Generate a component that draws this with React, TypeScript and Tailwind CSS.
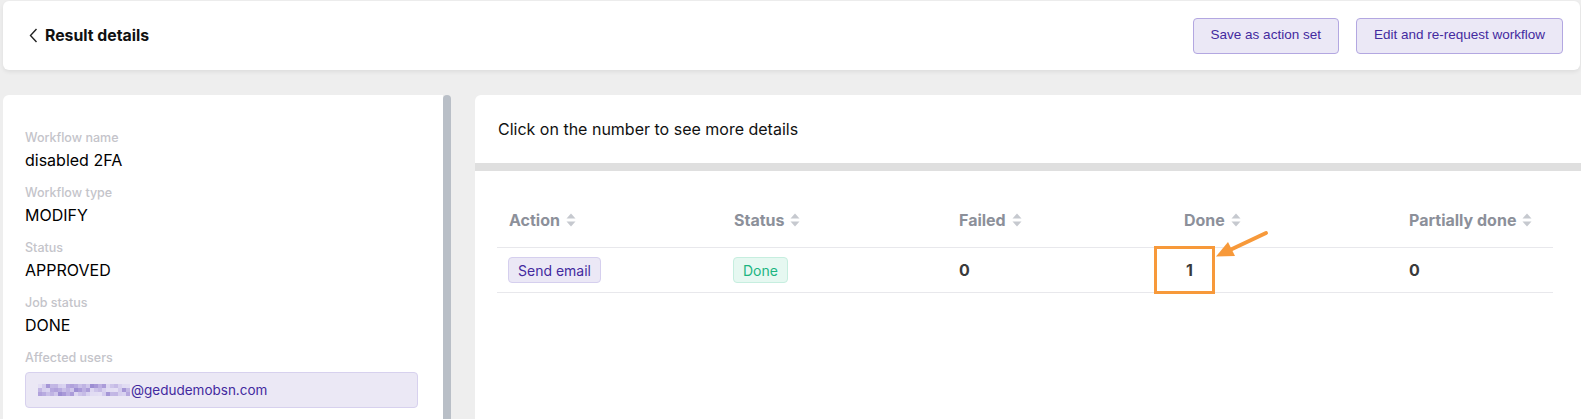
const details = [
  { label: 'Workflow name', value: 'disabled 2FA' },
  { label: 'Workflow type', value: 'MODIFY' },
  { label: 'Status', value: 'APPROVED' },
  { label: 'Job status', value: 'DONE' },
]

const columns = ['Action', 'Status', 'Failed', 'Done', 'Partially done']

// pixelated (redacted) part of the e-mail address
const mosaic = [
  'bg-[#e4dff4]', 'bg-[#c9bfe8]', 'bg-[#d8d1ef]', 'bg-[#b6a8df]', 'bg-[#ddd7f1]', 'bg-[#c2b6e4]',
  'bg-[#a999d8]', 'bg-[#d3cbed]', 'bg-[#bfb3e3]', 'bg-[#e1dcf3]', 'bg-[#b1a2dc]', 'bg-[#cdc4ea]',
  'bg-[#d6cfee]', 'bg-[#bcafe2]', 'bg-[#a596d6]', 'bg-[#cfc6eb]', 'bg-[#e2ddf3]', 'bg-[#b8abe0]',
  'bg-[#c6bbe6]', 'bg-[#d9d3f0]', 'bg-[#ab9cd9]', 'bg-[#c3b8e5]', 'bg-[#9d8ed3]',
]

function SortIcon() {
  return (
    <svg width="10" height="14" viewBox="0 0 10 14" className="ml-[6px]">
      <path d="M5 0.5 L9.5 5.5 L0.5 5.5 Z" fill="#c6c9cf" />
      <path d="M0.5 8.5 L9.5 8.5 L5 13.5 Z" fill="#c6c9cf" />
    </svg>
  )
}

function Mosaic() {
  return (
    <div className="flex flex-col">
      {[0, 1, 2].map((r) => (
        <div key={r} className="flex">
          {mosaic.map((c, i) => (
            <div key={i} className={`w-[4px] h-[4px] ${mosaic[(i * 7 + r * 5) % mosaic.length]}`} />
          ))}
        </div>
      ))}
    </div>
  )
}

export default function App() {
  return (
    <div className="w-[1581px] h-[419px] overflow-hidden bg-[#eeeeee] font-['Inter',sans-serif] text-[#111]">
      <header className="ml-[3px] mr-[1px] mt-[1px] h-[69px] bg-white rounded-md shadow-[0_2px_4px_rgba(0,0,0,0.07)] flex items-center justify-between pl-[26px] pr-[17px]">
        <div className="flex items-center gap-[7px]">
          <svg width="9" height="15" viewBox="0 0 9 15" className="text-[#222]">
            <path d="M7.5 1 L1.5 7.5 L7.5 14" fill="none" stroke="currentColor" strokeWidth="1.4" />
          </svg>
          <h1 className="text-[15.8px] font-bold leading-none">Result details</h1>
        </div>
        <div className="flex gap-[17px] font-['Liberation_Sans',Arial,sans-serif] text-[13.5px] text-[#432a9f]">
          <button className="h-[36px] px-[17px] rounded-[4px] bg-[#ebe8f6] border border-[#b3a7e1]">
            Save as action set
          </button>
          <button className="h-[36px] px-[17px] rounded-[4px] bg-[#ebe8f6] border border-[#b3a7e1]">
            Edit and re-request workflow
          </button>
        </div>
      </header>

      <div className="flex mt-[25px] h-[324px]">
        <aside className="ml-[3px] w-[440px] bg-white rounded-tl-md pl-[22px] pt-[35px]">
          {details.map((d) => (
            <div key={d.label} className="mb-[14px]">
              <div className="text-[12.5px] leading-[16px] text-[#c4c4ca] font-medium">{d.label}</div>
              <div className="mt-[3px] text-[16px] leading-[22px] text-black">{d.value}</div>
            </div>
          ))}
          <div className="text-[12.5px] leading-[16px] text-[#c4c4ca] font-medium">Affected users</div>
          <div className="mt-[6px] w-[393px] h-[36px] rounded-[4px] bg-[#ebe8f5] border border-[#d7d1ee] flex items-center pl-[12px] text-[13.5px] text-[#432a9f]">
            <Mosaic />
            <span className="ml-[1px]">@gedudemobsn.com</span>
          </div>
        </aside>
        <div className="w-[8px] bg-[#b9bfc7] rounded-t-full" />

        <main className="ml-[24px] flex-1 flex flex-col">
          <div className="h-[68px] bg-white rounded-tl-md flex items-center pl-[23px] text-[16px]">
            Click on the number to see more details
          </div>
          <div className="h-[8px] bg-[#dfdfdf]" />
          <div className="flex-1 bg-white pl-[22px] pr-[28px] pt-[21px]">
            <div className="relative">
              <div className="grid grid-cols-[225px_225px_225px_225px_1fr] h-[56px] items-center border-b border-[#e8e8ec]">
                {columns.map((c) => (
                  <div key={c} className="pl-[12px] flex items-center text-[16px] font-bold text-[#8c909a]">
                    {c}
                    <SortIcon />
                  </div>
                ))}
              </div>
              <div className="grid grid-cols-[225px_225px_225px_225px_1fr] h-[45px] items-center border-b border-[#e8e8ec] text-[16px] font-bold text-[#3a3a3a]">
                <div className="pl-[11px]">
                  <span className="inline-flex items-center h-[26px] px-[9px] rounded-[4px] bg-[#ebe8f6] border border-[#d5cfee] text-[14px] font-normal text-[#432a9f]">
                    Send email
                  </span>
                </div>
                <div className="pl-[11px]">
                  <span className="inline-flex items-center h-[26px] px-[9px] rounded-[4px] bg-[#e6f8f1] border border-[#c6eedf] text-[14px] font-normal text-[#1cb581]">
                    Done
                  </span>
                </div>
                <div className="pl-[12px]">0</div>
                <div className="pl-[14px]">1</div>
                <div className="pl-[12px]">0</div>
              </div>

              <div className="absolute left-[657px] top-[54px] w-[61px] h-[48px] border-[3px] border-[#f7993a]" />
              <svg className="absolute left-[712px] top-[35px]" width="62" height="36" viewBox="0 0 62 36">
                <line x1="57" y1="6" x2="22" y2="22.5" stroke="#f7993a" strokeWidth="4" strokeLinecap="round" />
                <polygon points="7,29.5 26,29 19,15" fill="#f7993a" />
              </svg>
            </div>
          </div>
        </main>
      </div>
    </div>
  )
}
